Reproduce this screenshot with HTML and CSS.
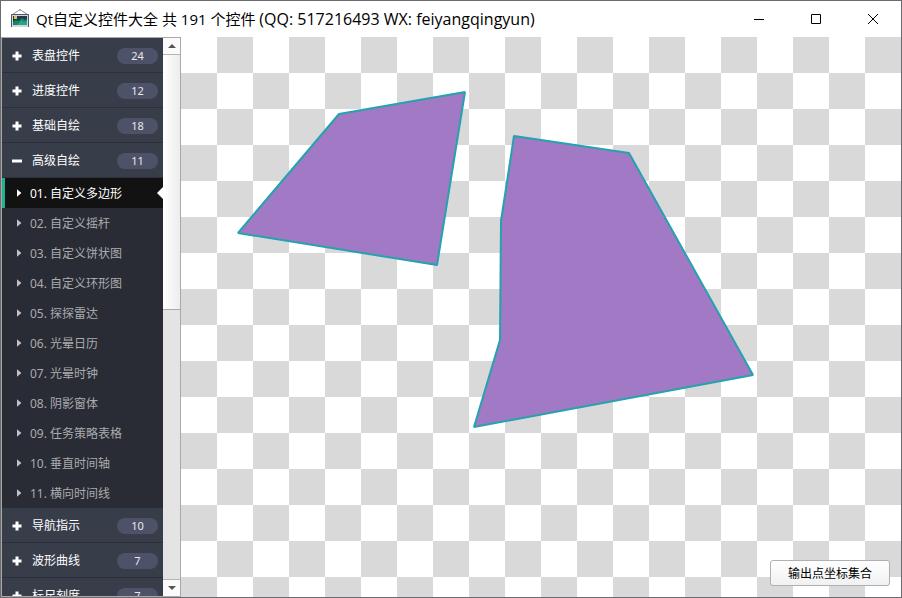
FILE: index.html
```html
<!DOCTYPE html>
<html lang="zh-CN">
<head>
<meta charset="utf-8">
<title>Qt自定义控件大全</title>
<link rel="stylesheet" href="styles.css">
</head>
<body>
<svg class="defs" aria-hidden="true">
  <symbol id="plus" viewBox="0 0 10 10"><path d="M3.5 0.5h3v3h3v3h-3v3h-3v-3h-3v-3h3z"/></symbol>
  <symbol id="minus" viewBox="0 0 10 10"><path d="M0 3.5h10v3H0z"/></symbol>
  <symbol id="caret" viewBox="0 0 5 8"><path d="M0 0.2L4.4 4L0 7.8z"/></symbol>
</svg>
<div class="window">
  <header class="titlebar">
    <svg class="app-icon" viewBox="0 0 20 20" aria-hidden="true">
      <path d="M2.5 5.5L8 2M17.5 5.5L12 2" stroke="#8a8a8a" fill="none"/>
      <path d="M8.5 1.5Q10 0 11.5 1.5" stroke="#555" fill="none"/>
      <rect x="1" y="5" width="18" height="13" fill="#d3d6da"/>
      <path d="M1.5 18V5.5h17V18" stroke="#4d5664" fill="none"/>
      <rect x="3" y="7" width="14" height="9" fill="#23384f"/>
      <path d="M3 16v-3l3-2 3 1 3-3 3 2 2-1v6z" fill="#13856c"/>
      <path d="M7 16l4-5 3 2 3-1v4z" fill="#29a483"/>
      <rect x="4" y="7" width="3" height="3" fill="#d9c44c"/>
    </svg>
    <h1 class="title">Qt自定义控件大全 共 191 个控件 <span class="contact">(QQ: 517216493 WX: feiyangqingyun)</span></h1>
    <div class="window-controls">
      <button class="window-button" aria-label="最小化"><svg viewBox="0 0 12 12"><path d="M1 6.5h10"/></svg></button>
      <button class="window-button" aria-label="最大化"><svg viewBox="0 0 12 12"><path d="M1.5 1.5h9v9h-9z"/></svg></button>
      <button class="window-button" aria-label="关闭"><svg viewBox="0 0 12 12"><path d="M1 1l10 10M11 1L1 11"/></svg></button>
    </div>
  </header>
  <div class="content">
    <aside class="sidebar">
      <nav class="menu">
        <button class="group"><svg class="sign"><use href="#plus"/></svg><span class="name">表盘控件</span><span class="count">24</span></button>
        <button class="group"><svg class="sign"><use href="#plus"/></svg><span class="name">进度控件</span><span class="count">12</span></button>
        <button class="group"><svg class="sign"><use href="#plus"/></svg><span class="name">基础自绘</span><span class="count">18</span></button>
        <button class="group"><svg class="sign"><use href="#minus"/></svg><span class="name">高级自绘</span><span class="count">11</span></button>
        <a class="item selected" href="#"><svg class="caret"><use href="#caret"/></svg><span class="label">01. 自定义多边形</span></a>
        <a class="item" href="#"><svg class="caret"><use href="#caret"/></svg><span class="label">02. 自定义摇杆</span></a>
        <a class="item" href="#"><svg class="caret"><use href="#caret"/></svg><span class="label">03. 自定义饼状图</span></a>
        <a class="item" href="#"><svg class="caret"><use href="#caret"/></svg><span class="label">04. 自定义环形图</span></a>
        <a class="item" href="#"><svg class="caret"><use href="#caret"/></svg><span class="label">05. 探探雷达</span></a>
        <a class="item" href="#"><svg class="caret"><use href="#caret"/></svg><span class="label">06. 光晕日历</span></a>
        <a class="item" href="#"><svg class="caret"><use href="#caret"/></svg><span class="label">07. 光晕时钟</span></a>
        <a class="item" href="#"><svg class="caret"><use href="#caret"/></svg><span class="label">08. 阴影窗体</span></a>
        <a class="item" href="#"><svg class="caret"><use href="#caret"/></svg><span class="label">09. 任务策略表格</span></a>
        <a class="item" href="#"><svg class="caret"><use href="#caret"/></svg><span class="label">10. 垂直时间轴</span></a>
        <a class="item" href="#"><svg class="caret"><use href="#caret"/></svg><span class="label">11. 横向时间线</span></a>
        <button class="group"><svg class="sign"><use href="#plus"/></svg><span class="name">导航指示</span><span class="count">10</span></button>
        <button class="group"><svg class="sign"><use href="#plus"/></svg><span class="name">波形曲线</span><span class="count">7</span></button>
        <button class="group"><svg class="sign"><use href="#plus"/></svg><span class="name">标尺刻度</span><span class="count">7</span></button>
      </nav>
      <div class="scrollbar">
        <button class="scroll-arrow up" aria-label="向上滚动"><svg viewBox="0 0 8 4"><path d="M0 4L4 0L8 4z"/></svg></button>
        <div class="thumb"></div>
        <div class="track"></div>
        <button class="scroll-arrow down" aria-label="向下滚动"><svg viewBox="0 0 8 4"><path d="M0 0L4 4L8 0z"/></svg></button>
      </div>
    </aside>
    <main class="canvas">
      <svg class="shapes" aria-hidden="true">
        <polygon points="158,77 284,55 256,228 57,196"/>
        <polygon points="333,99 448,116 572,338 293,390 319,303 320,184"/>
      </svg>
      <button class="output">输出点坐标集合</button>
    </main>
  </div>
</div>
</body>
</html>
```

FILE: styles.css
```css
* {
  box-sizing: border-box;
}

body {
  margin: 0;
  font-family: "Noto Sans", "Noto Sans CJK SC", sans-serif;
  font-size: 12px;
}

button {
  margin: 0;
  padding: 0;
  border: 0;
  background: none;
  font: inherit;
  color: inherit;
}

.defs {
  display: none;
}

.window {
  display: flex;
  flex-direction: column;
  height: 100vh;
  border: 1px solid #6c6a6e;
  background: #fff;
}

.titlebar {
  display: flex;
  flex: none;
  align-items: center;
  height: 36px;
  padding-left: 9px;
}

.app-icon {
  width: 20px;
  height: 20px;
}

.title {
  flex: 1;
  margin: 0 0 0 6px;
  overflow: hidden;
  font-family: "Open Sans", "Noto Sans CJK SC", sans-serif;
  font-size: 15px;
  font-weight: 400;
  line-height: 20px;
  white-space: nowrap;
  color: #000;
}

.contact {
  font-size: 16px;
}

.window-controls {
  display: flex;
}

.window-button {
  display: flex;
  align-items: center;
  justify-content: center;
  width: 57px;
  height: 34px;
}

.window-button svg {
  width: 12px;
  height: 12px;
  fill: none;
  stroke: #000;
}

.content {
  display: flex;
  flex: 1;
  min-height: 0;
}

.sidebar {
  display: flex;
  flex: none;
  width: 180px;
  border: 1px solid #a9a9a9;
}

.menu {
  display: flex;
  flex: 1;
  flex-direction: column;
  overflow: hidden;
  background: #292c34;
}

.group {
  display: flex;
  flex: none;
  align-items: center;
  height: 35px;
  padding: 2px 5px 0 10px;
  border-bottom: 1px solid #2d303a;
  background: #383d4a;
  color: #fff;
  text-align: left;
}

.sign {
  width: 10px;
  height: 10px;
  fill: #fff;
}

.name {
  flex: 1;
  margin-left: 10px;
  line-height: 16px;
}

.count {
  width: 41px;
  border-radius: 8px;
  background: #4e5268;
  font-size: 11px;
  line-height: 16px;
  text-align: center;
  color: #e8e9ee;
}

.item {
  display: flex;
  flex: none;
  align-items: center;
  gap: 8px;
  height: 30px;
  padding-left: 12px;
  border-left: 3px solid transparent;
  color: #a9abaf;
  white-space: nowrap;
  text-decoration: none;
}

.label {
  padding-top: 2px;
  line-height: 16px;
}

.caret {
  width: 5px;
  height: 8px;
  fill: #c0c3c8;
}

.selected {
  border-left-color: #1fb190;
  background: #121212;
  color: #fff;
}

.selected .caret {
  fill: #fff;
}

.selected::after {
  content: "";
  margin-left: auto;
  border: 6px solid transparent;
  border-left: 0;
  border-right-color: #fff;
}

.scrollbar {
  display: flex;
  flex: none;
  flex-direction: column;
  width: 17px;
  background: #e4e4e4;
}

.scroll-arrow {
  display: flex;
  flex: none;
  align-items: center;
  justify-content: center;
  height: 17px;
  background: #fafafa;
}

.scroll-arrow svg {
  width: 8px;
  height: 4px;
  fill: #555;
}

.up {
  border-bottom: 1px solid #b4b4b4;
}

.down {
  border-top: 1px solid #b4b4b4;
}

.thumb {
  flex: 254;
  border-bottom: 1px solid #a9a9a9;
  background: linear-gradient(to right, #fff, #ededee);
}

.track {
  flex: 270;
}

.canvas {
  position: relative;
  flex: 1;
  min-width: 0;
  background: repeating-conic-gradient(#fff 0 25%, #d9d9d9 0 50%) 36px 0 / 72px 72px;
}

.shapes {
  display: block;
  width: 100%;
  height: 100%;
  fill: #a179c5;
  stroke: #23a3ad;
  stroke-width: 2px;
  stroke-linejoin: bevel;
}

.output {
  position: absolute;
  right: 11px;
  bottom: 11px;
  width: 120px;
  height: 26px;
  border: 1px solid #aeb1b4;
  border-radius: 3px;
  background: linear-gradient(#fff, #f0f1f2);
  color: #000;
}
```
